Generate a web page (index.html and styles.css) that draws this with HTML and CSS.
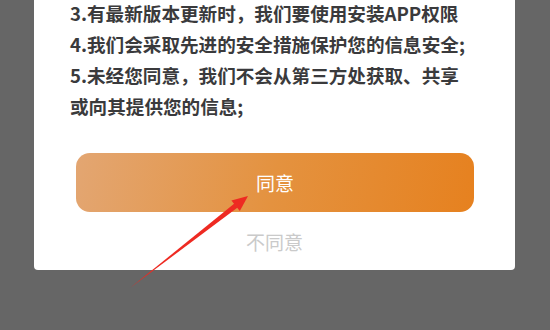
FILE: index.html
```html
<!DOCTYPE html>
<html lang="zh-CN">
<head>
<meta charset="utf-8">
<link rel="stylesheet" href="styles.css">
</head>
<body>
<div class="page">
  <div class="card">
    <div class="terms">
      <p>3.有最新版本更新时，我们要使用安装APP权限</p>
      <p>4.我们会采取先进的安全措施保护您的信息安全;</p>
      <p>5.未经您同意，我们不会从第三方处获取、共享</p>
      <p>或向其提供您的信息;</p>
    </div>
    <button class="agree">同意</button>
    <div class="disagree">不同意</div>
  </div>
  <svg class="arrow" width="550" height="330" viewBox="0 0 550 330">
    <polygon fill="#ee2a22" points="130,288 234.4,203.6 237.6,207.6"/>
    <polygon fill="#ee2a22" points="248,196 231.4,200.4 239.8,211"/>
  </svg>
</div>
</body>
</html>
```

FILE: styles.css
```css
html, body {
  margin: 0;
  padding: 0;
}
body {
  width: 550px;
  height: 330px;
  overflow: hidden;
  background: #666666;
  font-family: "Noto Sans CJK SC", "Noto Sans", sans-serif;
}
.page {
  position: relative;
  width: 550px;
  height: 330px;
}
.card {
  margin-left: 34px;
  width: 481px;
  background: #ffffff;
  border-radius: 0 0 4px 4px;
  padding-bottom: 13px;
  display: flex;
  flex-direction: column;
  overflow: hidden;
}
.terms {
  margin-top: -3px;
  padding-left: 36px;
  font-size: 18.6px;
  line-height: 31px;
  font-weight: 700;
  color: #3a3a3c;
}
.terms p {
  margin: 0;
  white-space: nowrap;
}
.agree {
  margin: 32px 0 0 42px;
  width: 398px;
  height: 59px;
  border: none;
  border-radius: 14px;
  background: linear-gradient(100deg, #e3a672 0%, #e4923f 50%, #e6811f 100%);
  color: #ffffff;
  font-family: inherit;
  font-size: 19px;
  padding: 0;
  display: flex;
  align-items: center;
  justify-content: center;
}
.disagree {
  margin-top: 15px;
  height: 30px;
  line-height: 30px;
  text-align: center;
  font-size: 19px;
  color: #cacaca;
}
.arrow {
  position: absolute;
  left: 0;
  top: 0;
}
```
